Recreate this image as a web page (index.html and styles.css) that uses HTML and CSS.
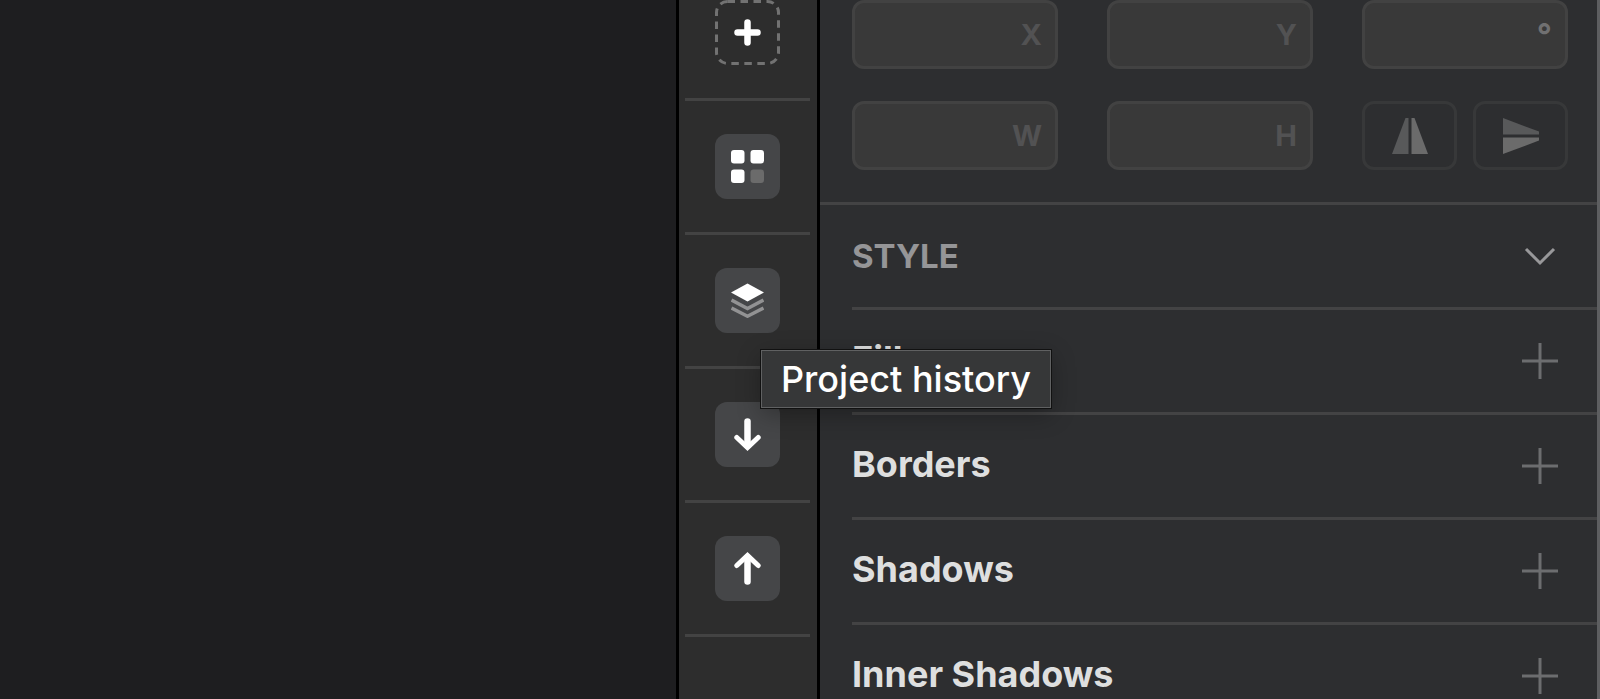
FILE: index.html
```
<!DOCTYPE html>
<html lang="en">

<head>
    <meta charset="UTF-8" />
    <meta name="viewport" content="width=device-width, initial-scale=1.0" />
    <title>Inspector</title>
    <link rel="stylesheet" href="styles.css">
</head>

<body>
    <main class="canvas"></main>

    <nav class="toolbar" aria-label="Plugin toolbar">
        <div class="tool">
            <button class="tool-btn tool-btn-add" aria-label="Add">
                <svg width="65" height="65" viewBox="0 0 65 65" fill="none">
                    <rect x="1.5" y="1.5" width="62" height="62" rx="11" stroke="#727272" stroke-width="3" stroke-dasharray="7.500 5.500" />
                    <path d="M32.5 22.5v20M22.5 32.5h20" stroke="#fff" stroke-width="6.5" stroke-linecap="round" />
                </svg>
            </button>
        </div>
        <div class="tool">
            <button class="tool-btn" aria-label="Components">
                <svg width="33" height="33" viewBox="0 0 33 33" fill="#fff">
                    <rect width="13.5" height="13.5" rx="3" />
                    <rect x="19.5" width="13.5" height="13.5" rx="3" />
                    <rect y="19.5" width="13.5" height="13.5" rx="3" />
                    <rect x="19.5" y="19.5" width="13.5" height="13.5" rx="3" fill="#6b6b6b" />
                </svg>
            </button>
        </div>
        <div class="tool">
            <button class="tool-btn" aria-label="Project history" aria-describedby="history-tip">
                <svg width="33" height="35" viewBox="0 0 33 35" fill="none">
                    <path d="M0.5 17L16.5 25.5L32.5 17M0.5 25L16.5 33.2L32.5 25" stroke="#929293" stroke-width="3.5" />
                    <path d="M16.5 0.5L33 9.5L16.5 18.5L0 9.5Z" fill="#fff" />
                </svg>
            </button>
            <div class="tooltip" id="history-tip" role="tooltip">Project history</div>
        </div>
        <div class="tool">
            <button class="tool-btn" aria-label="Pull">
                <svg width="27" height="33" viewBox="0 0 27 33" fill="none" stroke="#fff" stroke-linecap="round">
                    <path d="M13.5 3.5v24" stroke-width="6.5" />
                    <path d="M2.8 19.5L13.5 29.5L24.2 19.5" stroke-width="5" />
                </svg>
            </button>
        </div>
        <div class="tool">
            <button class="tool-btn" aria-label="Push">
                <svg width="27" height="33" viewBox="0 0 27 33" fill="none" stroke="#fff" stroke-linecap="round">
                    <path d="M13.5 29.5v-24" stroke-width="6.5" />
                    <path d="M2.8 13.5L13.5 3.5L24.2 13.5" stroke-width="5" />
                </svg>
            </button>
        </div>
    </nav>

    <aside class="inspector">
        <form class="geometry">
            <label class="field"><input type="text" /><span>X</span></label>
            <label class="field"><input type="text" /><span>Y</span></label>
            <label class="field field-angle"><input type="text" /><span>°</span></label>
            <label class="field"><input type="text" /><span>W</span></label>
            <label class="field"><input type="text" /><span>H</span></label>
            <div class="flip">
                <button type="button" class="flip-btn" aria-label="Flip horizontally">
                    <svg width="36" height="36" viewBox="0 0 36 36">
                        <path d="M13.500 0h3v36H0Z" fill="#58595a" />
                        <path d="M19.500 0H22.500L36 36H19.500Z" fill="#6b6b6b" />
                    </svg>
                </button>
                <button type="button" class="flip-btn" aria-label="Flip vertically">
                    <svg width="36" height="36" viewBox="0 0 36 36">
                        <path d="M0 0L36 13.500v3H0Z" fill="#58595a" />
                        <path d="M0 19.500H36V22.500L0 36Z" fill="#6b6b6b" />
                    </svg>
                </button>
            </div>
        </form>

        <section class="style">
            <div class="row">
                <h2>STYLE</h2>
                <button class="row-btn" aria-label="Collapse">
                    <svg width="36" height="36" viewBox="0 0 36 36" fill="none">
                        <path d="M4 11L18 25L32 11" stroke="#98989a" stroke-width="3" />
                    </svg>
                </button>
            </div>
            <div class="row">
                <h3>Fill</h3>
                <button class="row-btn" aria-label="Add fill">
                    <svg width="36" height="36" viewBox="0 0 36 36"><path d="M18 0v36M0 18h36" stroke="#6c6d6f" stroke-width="3" /></svg>
                </button>
            </div>
            <div class="row">
                <h3>Borders</h3>
                <button class="row-btn" aria-label="Add border">
                    <svg width="36" height="36" viewBox="0 0 36 36"><path d="M18 0v36M0 18h36" stroke="#6c6d6f" stroke-width="3" /></svg>
                </button>
            </div>
            <div class="row">
                <h3>Shadows</h3>
                <button class="row-btn" aria-label="Add shadow">
                    <svg width="36" height="36" viewBox="0 0 36 36"><path d="M18 0v36M0 18h36" stroke="#6c6d6f" stroke-width="3" /></svg>
                </button>
            </div>
            <div class="row">
                <h3>Inner Shadows</h3>
                <button class="row-btn" aria-label="Add inner shadow">
                    <svg width="36" height="36" viewBox="0 0 36 36"><path d="M18 0v36M0 18h36" stroke="#6c6d6f" stroke-width="3" /></svg>
                </button>
            </div>
        </section>
    </aside>
</body>

</html>
```
FILE: styles.css
```
* {
    box-sizing: border-box;
}

body {
    margin: 0;
    height: 100vh;
    display: flex;
    overflow: hidden;
    background: #1e1e20;
    font-family: Inter, "Liberation Sans", sans-serif;
}

button {
    padding: 0;
    border: none;
    background: none;
    cursor: pointer;
}

svg {
    display: block;
}

.canvas {
    flex: 1;
}

/* vertical toolbar */
.toolbar {
    flex: none;
    width: 144px;
    padding: 0 7px 0 6px;
    background: #2d2d2d;
    border-left: 3px solid #000;
    border-right: 3px solid #000;
}

.tool {
    position: relative;
    display: flex;
    justify-content: center;
    padding: 33px 0;
    border-bottom: 3px solid #434343;
}

.tool:first-child {
    padding-top: 0;
}

.tool-btn {
    width: 65px;
    height: 65px;
    display: flex;
    align-items: center;
    justify-content: center;
    border-radius: 12px;
    background: #454648;
}

.tool-btn-add {
    background: none;
}

.tooltip {
    position: absolute;
    top: 115px;
    left: 76px;
    z-index: 5;
    padding: 8px 19px;
    border: 1px solid #606162;
    outline: 1px solid #111;
    background: #363738;
    box-shadow: 0 6px 24px rgba(0, 0, 0, 0.3);
    color: #fff;
    font-size: 36px;
    font-weight: 500;
    line-height: 40px;
    white-space: nowrap;
}

/* inspector */
.inspector {
    flex: none;
    width: 780px;
    background: #2d2e30;
    border-right: 3px solid #5d5e60;
}

.geometry {
    display: grid;
    grid-template-columns: repeat(3, minmax(0, 1fr));
    gap: 32px 49px;
    padding: 0 29px 32px 32px;
    border-bottom: 3px solid #434344;
}

.field {
    display: flex;
    align-items: center;
    height: 69px;
    padding-right: 13px;
    border: 3px solid #424242;
    border-radius: 12px;
    background: #393939;
    color: #525253;
    font-size: 29px;
    font-weight: 700;
}

.field input {
    flex: 1;
    width: 100%;
    min-width: 0;
    height: 100%;
    padding: 0 13px;
    border: none;
    outline: none;
    background: none;
    color: #dedfdf;
    font: inherit;
}

.field-angle {
    color: #707071;
    font-size: 33px;
}

.flip {
    display: grid;
    grid-template-columns: 1fr 1fr;
    gap: 16px;
}

.flip-btn {
    display: flex;
    align-items: center;
    justify-content: center;
    border: 3px solid #373839;
    border-radius: 12px;
}

.row {
    display: flex;
    align-items: center;
    justify-content: space-between;
    height: 105px;
    margin-left: 32px;
    padding-right: 39px;
    border-bottom: 3px solid #434344;
}

.row h2,
.row h3 {
    margin: 0;
    font-weight: 700;
}

.row h2 {
    color: #959597;
    font-size: 33px;
}

.row h3 {
    padding-bottom: 5px;
    color: #dedfdf;
    font-size: 36px;
}
```
